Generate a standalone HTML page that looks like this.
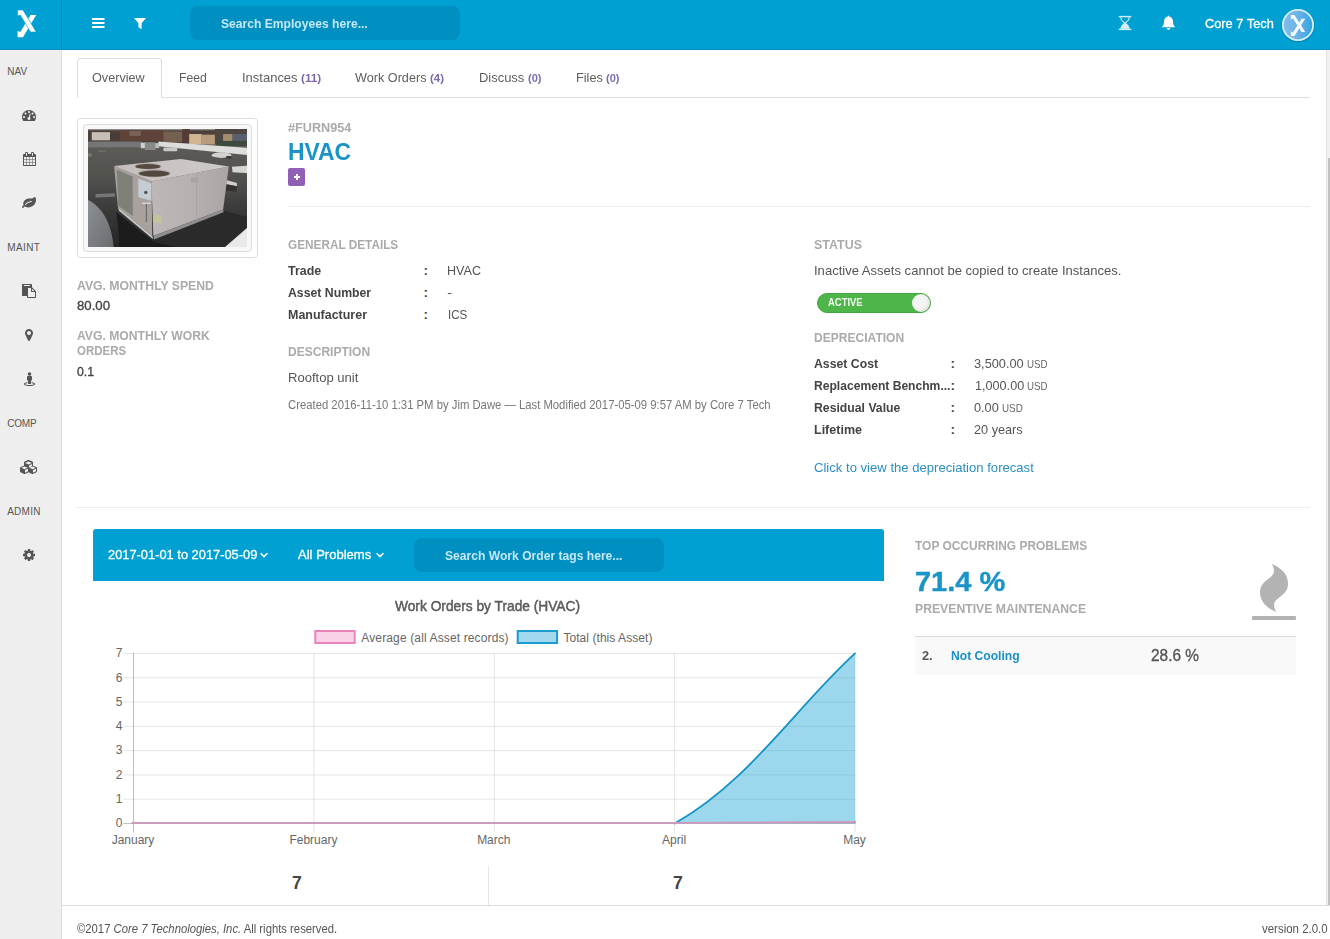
<!DOCTYPE html>
<html lang="en">
<head>
<meta charset="utf-8">
<title>HVAC - Asset Overview</title>
<style>
*{box-sizing:border-box;margin:0;padding:0}
html,body{width:1330px;height:939px;overflow:hidden;background:#fff}
body{font-family:"Liberation Sans",sans-serif;font-size:13px;color:#555;position:relative}
.t{position:absolute;white-space:nowrap;line-height:16px;transform-origin:0 50%}
.m{-webkit-text-stroke:0.3px currentColor}
.hd{position:absolute;left:0;top:0;width:1330px;height:50px;background:#00a0d2;border-bottom:1px solid #008bb9}
.hd .sep{position:absolute;left:61px;top:0;width:1px;height:50px;background:#0087b3}
.sb{position:absolute;left:0;top:50px;width:62px;height:889px;background:#eee;border-right:1px solid #ddd}
.a{position:absolute}
.srch{position:absolute;background:#008fc1;border-radius:8px}
.tabline{position:absolute;left:77px;top:97px;width:1233px;height:1px;background:#ddd}
.tabact{position:absolute;left:77px;top:58px;width:85px;height:40px;border:1px solid #ddd;border-bottom:1px solid #fff;border-radius:4px 4px 0 0;background:#fff}
.hr{position:absolute;height:1px;background:#eee}
.scroll{position:absolute;left:1326px;top:50px;width:4px;height:855px;background:#f1f1f1;border-left:1px solid #e2e2e2}
.scroll i{position:absolute;left:1.4px;top:108px;width:3px;height:747px;background:#c1c1c1}
.foot{position:absolute;left:62px;top:905px;width:1268px;height:34px;border-top:1px solid #ddd;background:#fff}
</style>
</head>
<body>
<header>
<div class="hd">
<div class="sep"></div>
<svg class="a" style="left:0;top:0" width="61" height="50" viewBox="0 0 61 50">
<polygon points="36.2,15 30.5,15 20.3,32 17.6,31 17.6,37.3 23,37.3" fill="#fff"/>
<polygon points="17.6,10 23,10 36.2,32 30.5,32 20.3,15 17.6,16" fill="#fff" stroke="#00a0d2" stroke-width="0.6"/>
</svg>
<svg class="a" style="left:92px;top:18px" width="13" height="10" viewBox="0 0 13 10"><rect x="0" y="0" width="12.5" height="2" fill="#fff"/><rect x="0" y="4" width="12.5" height="2" fill="#fff"/><rect x="0" y="8" width="12.5" height="2" fill="#fff"/></svg>
<svg class="a" style="left:133px;top:17px" width="14" height="13" viewBox="0 0 14 13"><path d="M1 1 H13 L8.6 6.2 V12.2 L5.4 10.2 V6.2 Z" fill="#fff"/></svg>
<div class="srch" style="left:190px;top:6px;width:270px;height:34px"></div>
<span class="t" style="left:221.2px;top:16px;font-size:13.5px;line-height:16px;color:#c4e8f6;font-weight:bold;transform:scaleX(0.897);">Search Employees here...</span>
<svg class="a" style="left:1118px;top:15px" width="14" height="16" viewBox="0 0 14 16"><g fill="#d2effa"><rect x="0.7" y="0.9" width="12.6" height="1.4"/><rect x="0.7" y="13.7" width="12.6" height="1.4"/><path d="M6.3 8 C4.6 9.4 2.4 11 2.3 13.8 H11.7 C11.6 11 9.4 9.4 7.7 8 Z"/></g><path d="M2.6 2.2 C2.7 5 4.8 6.4 6.5 7.9 H7.5 C9.2 6.4 11.3 5 11.4 2.2" fill="none" stroke="#d2effa" stroke-width="1.15"/></svg>
<svg class="a" style="left:1161px;top:15px" width="15" height="16" viewBox="0 0 15 16"><path d="M7.5 0.8 C8.1 0.8 8.5 1.2 8.5 1.8 C10.8 2.3 12 4.2 12 6.5 C12 9.5 12.8 11 14.4 12.3 H0.6 C2.2 11 3 9.5 3 6.5 C3 4.2 4.2 2.3 6.5 1.8 C6.5 1.2 6.9 0.8 7.5 0.8 Z M5.8 13 H9.2 C9.2 14 8.5 14.8 7.5 14.8 C6.5 14.8 5.8 14 5.8 13 Z" fill="#fff"/></svg>
<span class="t" style="left:1204.7px;top:16px;font-size:13.5px;line-height:16px;color:#fff;transform:scaleX(0.948);-webkit-text-stroke:0.3px #fff;">Core 7 Tech</span>
<svg class="a" style="left:1278px;top:5px" width="40" height="40" viewBox="-2 -2 40 40">
<defs><linearGradient id="av" x1="0" y1="0" x2="1" y2="0"><stop offset="0" stop-color="#86bdea"/><stop offset="0.5" stop-color="#6ab3e6"/><stop offset="1" stop-color="#2ba1de"/></linearGradient></defs>
<circle cx="18" cy="18.6" r="16.8" fill="rgba(0,60,100,0.22)"/>
<circle cx="18" cy="18" r="16" fill="url(#av)"/><circle cx="18" cy="18" r="15.1" fill="none" stroke="#d3effb" stroke-width="1.8"/>
<g transform="translate(-2.71,0.29) scale(0.77)" fill="#f3fbff"><polygon points="36.2,15 31.5,15 20.4,32.8 17.6,31.6 17.6,37.3 22.3,37.3"/><polygon points="17.6,10 22.3,10 36.2,32 31.5,32 20.4,14.6 17.6,15.8"/></g>
</svg>
</div>
<div class="scroll"><i></i></div>
</header>
<aside>
<div class="sb"></div>
<span class="t" style="left:7.2px;top:64px;font-size:10px;line-height:16px;color:#555;letter-spacing:0.08px;">NAV</span><span class="t" style="left:7.2px;top:240px;font-size:10px;line-height:16px;color:#555;letter-spacing:0.42px;">MAINT</span><span class="t" style="left:7.2px;top:416px;font-size:10px;line-height:16px;color:#555;letter-spacing:-0.21px;">COMP</span><span class="t" style="left:7.2px;top:504px;font-size:10px;line-height:16px;color:#555;letter-spacing:0.24px;">ADMIN</span>
<svg class="a" style="left:22px;top:108px" width="14" height="14" viewBox="0 0 1792 1792"><path fill="#555" d="M384 1152q0-53-37.500-90.500t-90.500-37.500-90.500 37.500-37.500 90.500 37.500 90.500 90.500 37.500 90.500-37.500 37.500-90.500zM576 704q0-53-37.500-90.500t-90.500-37.500-90.500 37.500-37.500 90.500 37.500 90.500 90.500 37.500 90.500-37.500 37.500-90.500zM1004 1185l101-382q6-26-7.500-48.500t-38.500-29.500-48 6.500-30 39.500l-101 382q-60 5-107 43.500t-63 98.500q-20 77 20 146t117 89 146-20 89-117q16-60-6-117t-72-91zM1664 1152q0-53-37.500-90.500t-90.500-37.500-90.500 37.500-37.500 90.500 37.500 90.500 90.500 37.500 90.500-37.500 37.500-90.500zM1024 512q0-53-37.500-90.500t-90.500-37.500-90.500 37.500-37.500 90.500 37.500 90.500 90.500 37.500 90.500-37.500 37.500-90.500zM1472 704q0-53-37.500-90.500t-90.500-37.500-90.500 37.500-37.500 90.500 37.500 90.500 90.500 37.500 90.500-37.500 37.500-90.500zM1792 1152q0 261-141 483-19 29-54 29h-1402q-35 0-54-29-141-221-141-483 0-182 71-348t191-286 286-191 348-71 348 71 286 191 191 286 71 348z"/></svg>
<svg class="a" style="left:22.5px;top:152px" width="13" height="14" viewBox="0 0 1664 1792"><path fill="#555" d="M128 1664h288v-288h-288v288zM480 1664h320v-288h-320v288zM128 1312h288v-320h-288v320zM480 1312h320v-320h-320v320zM128 928h288v-288h-288v288zM864 1664h320v-288h-320v288zM480 928h320v-288h-320v288zM1248 1664h288v-288h-288v288zM864 1312h320v-320h-320v320zM512 448v-288q0-13-9.500-22.500t-22.500-9.500h-64q-13 0-22.500 9.500t-9.500 22.500v288q0 13 9.500 22.500t22.500 9.500h64q13 0 22.500-9.500t9.500-22.500zM1248 1312h288v-320h-288v320zM864 928h320v-288h-320v288zM1248 928h288v-288h-288v288zM1280 448v-288q0-13-9.500-22.500t-22.500-9.500h-64q-13 0-22.500 9.500t-9.500 22.500v288q0 13 9.500 22.500t22.500 9.500h64q13 0 22.500-9.500t9.500-22.500zM1664 384v1280q0 52-38 90t-90 38h-1408q-52 0-90-38t-38-90v-1280q0-52 38-90t90-38h128v-96q0-66 47-113t113-47h64q66 0 113 47t47 113v96h384v-96q0-66 47-113t113-47h64q66 0 113 47t47 113v96h128q52 0 90 38t38 90z"/></svg>
<svg class="a" style="left:22px;top:196px" width="14" height="14" viewBox="0 0 1792 1792"><path fill="#555" d="M1280 704q0-26-19-45t-45-19q-172 0-318 49.500t-259.500 134-235.500 219.500q-19 21-19 45 0 26 19 45t45 19q24 0 45-19 27-24 74-71t67-66q137-124 268.500-176t313.500-52q26 0 45-19t19-45zM1792 506q0 95-20 193-46 224-184.500 383t-357.500 268q-214 108-438 108-148 0-286-47-15-5-88-42t-96-37q-16 0-39.500 32t-45 70-52.500 70-60 32q-43 0-63.500-17.500t-45.500-59.500q-2-4-6-11t-5.500-10-3-9.500-1.500-13.500q0-35 31-73.500t68-65.500 68-56 31-48q0-4-14-38t-16-44q-9-51-9-104 0-115 43.500-220t119-184.500 170.500-139 204-95.500q55-18 145-25.500t179.500-9 178.500-6 163.500-24 113.500-56.500l29.500-29.500t29.500-28 27-20 36.500-16 43.500-4.500q39 0 70.500 46t47.500 112 24 124 8 96z"/></svg>
<svg class="a" style="left:22px;top:284px" width="14" height="14" viewBox="0 0 1792 1792"><path fill="#555" d="M768 1664h896v-640h-416q-40 0-68-28t-28-68v-416h-384v1152zM1024 224v-64q0-13-9.500-22.500t-22.500-9.500h-704q-13 0-22.500 9.500t-9.500 22.500v64q0 13 9.500 22.500t22.500 9.500h704q13 0 22.500-9.500t9.500-22.500zM1280 896h299l-299-299v299zM1792 1024v672q0 40-28 68t-68 28h-960q-40 0-68-28t-28-68v-160h-544q-40 0-68-28t-28-68v-1344q0-40 28-68t68-28h1088q40 0 68 28t28 68v328q21 13 36 28l408 408q28 28 48 76t20 88z"/></svg>
<svg class="a" style="left:25px;top:328px" width="8" height="14" viewBox="0 0 1024 1792"><path fill="#555" d="M768 640q0-106-75-181t-181-75-181 75-75 181 75 181 181 75 181-75 75-181zM1024 640q0 109-33 179l-364 774q-16 33-47.500 52t-67.500 19-67.500-19-46.500-52l-365-774q-33-70-33-179 0-212 150-362t362-150 362 150 150 362z"/></svg>
<svg class="a" style="left:23.5px;top:372px" width="11" height="14" viewBox="0 0 1408 1792"><path fill="#555" d="M1408 1536q0 63-61.500 113.500t-164 81-225 46-253.500 15.500-253.500-15.500-225-46-164-81-61.500-113.500q0-49 33-88.500t91-66.500 118-44.500 131-29.500q26-5 48 10.500t26 41.500q5 26-10.500 48t-41.500 26q-58 10-106 23.500t-76.500 25.500-48.500 23.500-27.500 19.500-8.500 12q3 11 27 26.500t73 33 114 32.500 160.500 25 201.500 10 201.500-10 160.500-25 114-33 73-33.500 27-27.500q-1-4-8.500-11t-27.500-19-48.500-23.500-76.500-25-106-23.500q-26-4-41.500-26t-10.500-48q4-26 26-41.500t48-10.500q71 12 131 29.500t118 44.500 91 66.500 33 88.500zM1024 640v384q0 26-19 45t-45 19h-64v384q0 26-19 45t-45 19h-256q-26 0-45-19t-19-45v-384h-64q-26 0-45-19t-19-45v-384q0-53 37.500-90.500t90.500-37.500h384q53 0 90.500 37.500t37.500 90.500zM928 256q0 93-65.500 158.500t-158.500 65.500-158.500-65.500-65.500-158.500 65.500-158.500 158.500-65.500 158.500 65.500 65.500 158.500z"/></svg>
<svg class="a" style="left:20px;top:460px" width="18" height="14" viewBox="0 0 2304 1792"><path fill="#555" d="M640 1632l384-192v-314l-384 164v342zM576 1178l404-173-404-173-404 173zM1664 1632l384-192v-314l-384 164v342zM1600 1178l404-173-404-173-404 173zM1152 958l384-165v-266l-384 164v267zM1088 579l441-189-441-189-441 189zM2176 1024v416q0 36-19 67t-52 47l-448 224q-25 14-57 14t-57-14l-448-224q-4-2-7-4-2 2-7 4l-448 224q-25 14-57 14t-57-14l-448-224q-33-16-52-47t-19-67v-416q0-38 21.500-70t56.500-48l434-186v-400q0-38 21.500-70t56.500-48l448-192q23-10 50-10t50 10l448 192q35 16 56.500 48t21.500 70v400l434 186q36 16 57 48t21 70z"/></svg>
<svg class="a" style="left:23px;top:548px" width="12" height="14" viewBox="0 0 1536 1792"><path fill="#555" d="M1024 896q0-106-75-181t-181-75-181 75-75 181 75 181 181 75 181-75 75-181zM1536 787v222q0 12-8 23t-20 13l-185 28q-19 54-39 91 35 50 107 138 10 12 10 25t-9 23q-27 37-99 108t-94 71q-12 0-26-9l-138-108q-44 23-91 38-16 136-29 186-7 28-36 28h-222q-14 0-24.500-8.500t-11.500-21.500l-28-184q-49-16-90-37l-141 107q-10 9-25 9-14 0-25-11-126-114-165-168-7-10-7-23 0-12 8-23 15-21 51-66.500t54-70.500q-27-50-41-99l-183-27q-13-2-21-12.500t-8-23.500v-222q0-12 8-23t19-13l186-28q14-46 39-92-40-57-107-138-10-12-10-24 0-10 9-23 26-36 98.500-107.500t94.500-71.500q13 0 26 10l138 107q44-23 91-38 16-136 29-186 7-28 36-28h222q14 0 24.500 8.500t11.500 21.500l28 184q49 16 90 37l142-107q9-9 24-9 13 0 25 10 129 119 165 170 7 8 7 22 0 12-8 23-15 21-51 66.500t-54 70.500q26 50 41 98l183 28q13 2 21 12.500t8 23.500z"/></svg>

</aside>
<main>
<nav>
<div class="tabline"></div><div class="tabact"></div>
<span class="t" style="left:92.4px;top:70px;font-size:13.5px;line-height:16px;color:#5e5e5e;transform:scaleX(0.936);">Overview</span><span class="t" style="left:179.3px;top:70px;font-size:13.5px;line-height:16px;color:#5e5e5e;transform:scaleX(0.906);">Feed</span><span class="t" style="left:241.8px;top:70px;font-size:13.5px;line-height:16px;color:#5e5e5e;transform:scaleX(0.962);">Instances</span><span class="t" style="left:301.2px;top:70px;font-size:11.6px;line-height:16px;color:#7d6aab;font-weight:bold;transform:scaleX(1.014);">(11)</span><span class="t" style="left:355.4px;top:70px;font-size:13.5px;line-height:16px;color:#5e5e5e;transform:scaleX(0.937);">Work Orders</span><span class="t" style="left:430.2px;top:70px;font-size:11.6px;line-height:16px;color:#7d6aab;font-weight:bold;transform:scaleX(0.986);">(4)</span><span class="t" style="left:478.6px;top:70px;font-size:13.5px;line-height:16px;color:#5e5e5e;transform:scaleX(0.958);">Discuss</span><span class="t" style="left:527.7px;top:70px;font-size:11.6px;line-height:16px;color:#7d6aab;font-weight:bold;transform:scaleX(0.951);">(0)</span><span class="t" style="left:575.6px;top:70px;font-size:13.5px;line-height:16px;color:#5e5e5e;transform:scaleX(0.939);">Files</span><span class="t" style="left:606.2px;top:70px;font-size:11.6px;line-height:16px;color:#7d6aab;font-weight:bold;transform:scaleX(0.951);">(0)</span>
</nav>
<section>
<div class="a" style="left:77px;top:118px;width:181px;height:140px;border:1px solid #ddd;border-radius:4px;background:#fff"></div>
<div class="a" style="left:83px;top:124px;width:169px;height:128px;border:1px solid #ddd;border-radius:4px;background:#f8f8f8"></div>
<svg class="a" style="left:88px;top:129px" width="159" height="118" viewBox="0 0 1265 939" preserveAspectRatio="none">
<defs>
<linearGradient id="rf" x1="0" y1="0" x2="0" y2="1"><stop offset="0.12" stop-color="#5f5d59"/><stop offset="0.45" stop-color="#504f4c"/><stop offset="0.72" stop-color="#363636"/><stop offset="1" stop-color="#252525"/></linearGradient>
<linearGradient id="tp" x1="0" y1="0" x2="1" y2="0"><stop offset="0" stop-color="#c4bfbe"/><stop offset="1" stop-color="#cfcaca"/></linearGradient>
<linearGradient id="fr" x1="0" y1="0" x2="1" y2="0"><stop offset="0" stop-color="#bdb7b8"/><stop offset="0.55" stop-color="#b6b0b1"/><stop offset="1" stop-color="#aaa4a5"/></linearGradient>
<linearGradient id="dc" x1="0" y1="0" x2="1" y2="1"><stop offset="0" stop-color="#909396"/><stop offset="1" stop-color="#696b6f"/></linearGradient>
<filter id="bl" x="-5%" y="-5%" width="110%" height="110%"><feGaussianBlur stdDeviation="6"/></filter>
<clipPath id="pc"><rect x="0" y="0" width="1265" height="939"/></clipPath>
</defs>
<g clip-path="url(#pc)"><g filter="url(#bl)">
<rect x="-20" y="-20" width="1305" height="979" fill="url(#rf)"/>
<rect x="-20" y="-20" width="1305" height="135" fill="#4e3f3a"/>
<rect x="-20" y="-20" width="1305" height="30" fill="#8d8a8c"/>
<rect x="30" y="25" width="145" height="65" fill="#c4c0b8"/>
<rect x="175" y="35" width="80" height="55" fill="#4b3b38"/>
<rect x="255" y="10" width="345" height="85" fill="#5f4339"/>
<rect x="330" y="15" width="90" height="40" fill="#7a6257"/>
<rect x="600" y="20" width="150" height="85" fill="#75604f"/>
<rect x="750" y="0" width="60" height="110" fill="#553c36"/>
<rect x="805" y="40" width="100" height="80" fill="#cfb691"/>
<rect x="905" y="45" width="105" height="78" fill="#b79c7b"/>
<rect x="1010" y="0" width="275" height="120" fill="#4e4741"/>
<rect x="1075" y="40" width="75" height="55" fill="#a58d70"/>
<rect x="1150" y="40" width="135" height="55" fill="#596170"/>
<rect x="1020" y="95" width="265" height="40" fill="#3f4a3c"/>
<polygon points="-20,100 425,100 425,145 -20,148" fill="#747675"/>
<polygon points="560,100 1285,152 1285,208 560,137" fill="#dddddb"/>
<rect x="420" y="108" width="45" height="45" fill="#cfcfcd"/>
<rect x="452" y="105" width="85" height="62" fill="#868b89"/>
<rect x="535" y="112" width="30" height="40" fill="#bdbdbb"/>
<rect x="600" y="148" width="110" height="30" rx="8" fill="#c9c9c6"/>
<ellipse cx="1062" cy="208" rx="80" ry="22" fill="#d2d1cd"/>
<rect x="1100" y="215" width="40" height="20" fill="#3a3a38"/>
<polygon points="1145,300 1285,290 1285,352 1150,345" fill="#d6d5d0"/>
<polygon points="60,518 215,512 215,540 60,545" fill="#767676"/>
<rect x="0" y="195" width="30" height="25" fill="#777"/>
<rect x="80" y="170" width="60" height="14" fill="#6d6d6b"/>
<polygon points="225,660 520,900 720,939 250,939 240,780" fill="#1c1c1c"/>
<polygon points="520,900 1085,650 1265,700 1265,939 700,939" fill="#2c2c2c"/>
<polygon points="1100,405 1185,430 1185,455 1100,440" fill="#d0cec7"/>
<polygon points="1100,440 1185,455 1180,500 1100,490" fill="#33332f"/>
<path d="M-20 555 C90 600 190 720 205 959 L-20 959 Z" fill="url(#dc)"/>
<polygon points="1090,939 1265,788 1285,788 1285,959 1090,959" fill="#e9e9e9"/>
<polygon points="208,295 505,418 512,852 238,622" fill="#a9a19e"/>
<polygon points="228,322 355,378 357,692 242,612" fill="#7f8078"/>
<polygon points="238,622 512,852 518,878 248,652" fill="#c6c6c4"/>
<polygon points="505,418 1120,298 1075,640 520,852" fill="url(#fr)"/>
<polygon points="520,852 1075,640 1078,662 525,880" fill="#8f8f8f"/>
<polygon points="208,295 740,238 1120,298 505,418" fill="url(#tp)"/>
<polygon points="400,395 505,432 505,572 400,542" fill="#c3cdd3"/>
<circle cx="460" cy="505" r="13" fill="#4b4b4b"/>
<rect x="460" y="590" width="9" height="150" fill="#6b6766"/>
<rect x="430" y="585" width="70" height="12" fill="#d3d3d3"/>
<rect x="860" y="352" width="7" height="370" fill="#aaa3a4"/>
<rect x="820" y="385" width="55" height="40" fill="#a9a2a2"/>
<rect x="525" y="685" width="60" height="60" fill="#c4c49c"/>
<ellipse cx="477" cy="296" rx="109" ry="26" fill="#b3aca8"/>
<ellipse cx="477" cy="298" rx="100" ry="20" fill="#54483f"/>
<ellipse cx="527" cy="352" rx="132" ry="32" fill="#b3aca8"/>
<ellipse cx="527" cy="355" rx="122" ry="25" fill="#51463d"/>
</g></g>
</svg>

<span class="t" style="left:76.7px;top:278px;font-size:13.5px;line-height:16px;color:#aaa;font-weight:bold;transform:scaleX(0.905);">AVG. MONTHLY SPEND</span><span class="t" style="left:76.7px;top:298px;font-size:13.5px;line-height:16px;color:#444;transform:scaleX(0.979);-webkit-text-stroke:0.35px #444;">80.00</span><span class="t" style="left:76.7px;top:328px;font-size:13.5px;line-height:16px;color:#aaa;font-weight:bold;transform:scaleX(0.900);">AVG. MONTHLY WORK</span><span class="t" style="left:76.7px;top:343px;font-size:13.5px;line-height:16px;color:#aaa;font-weight:bold;transform:scaleX(0.851);">ORDERS</span><span class="t" style="left:76.7px;top:364px;font-size:13.5px;line-height:16px;color:#444;transform:scaleX(0.909);-webkit-text-stroke:0.35px #444;">0.1</span>
<span class="t" style="left:287.5px;top:120px;font-size:13.5px;line-height:16px;color:#aaa;font-weight:bold;transform:scaleX(0.939);">#FURN954</span><span class="t" style="left:288.2px;top:138px;font-size:23.5px;line-height:29px;color:#1a94c8;font-weight:bold;transform:scaleX(0.973);">HVAC</span>
<div class="a" style="left:288px;top:168px;width:17px;height:18px;border-radius:2px;background:#8f60b6"></div>
<svg class="a" style="left:293px;top:173px" width="8" height="8" viewBox="0 0 8 8"><path d="M3 1h2v2h2v2h-2v2h-2v-2h-2v-2h2z" fill="#fff"/></svg>
<div class="hr" style="left:288px;top:206px;width:1022px"></div>
<span class="t" style="left:287.8px;top:237px;font-size:13.5px;line-height:16px;color:#aaa;font-weight:bold;transform:scaleX(0.873);">GENERAL DETAILS</span><span class="t" style="left:287.8px;top:263px;font-size:13.5px;line-height:16px;color:#444;font-weight:bold;transform:scaleX(0.921);">Trade</span><span class="t" style="left:423.6px;top:263px;font-size:13.5px;line-height:16px;color:#444;font-weight:bold;">:</span><span class="t" style="left:447.2px;top:263px;font-size:13.5px;line-height:16px;color:#555;transform:scaleX(0.931);">HVAC</span>
<span class="t" style="left:287.8px;top:285px;font-size:13.5px;line-height:16px;color:#444;font-weight:bold;transform:scaleX(0.908);">Asset Number</span><span class="t" style="left:423.6px;top:285px;font-size:13.5px;line-height:16px;color:#444;font-weight:bold;">:</span><span class="t" style="left:447.2px;top:285px;font-size:13.5px;line-height:16px;color:#555;">-</span>
<span class="t" style="left:287.8px;top:307px;font-size:13.5px;line-height:16px;color:#444;font-weight:bold;transform:scaleX(0.924);">Manufacturer</span><span class="t" style="left:423.6px;top:307px;font-size:13.5px;line-height:16px;color:#444;font-weight:bold;">:</span><span class="t" style="left:447.9px;top:307px;font-size:13.5px;line-height:16px;color:#555;transform:scaleX(0.856);">ICS</span>
<span class="t" style="left:287.8px;top:344px;font-size:13.5px;line-height:16px;color:#aaa;font-weight:bold;transform:scaleX(0.890);">DESCRIPTION</span><span class="t" style="left:287.8px;top:370px;font-size:13.5px;line-height:16px;color:#555;transform:scaleX(0.967);">Rooftop unit</span><span class="t" style="left:287.9px;top:397px;font-size:12.4px;line-height:16px;color:#777;transform:scaleX(0.912);">Created 2016-11-10 1:31 PM by Jim Dawe — Last Modified 2017-05-09 9:57 AM by Core 7 Tech</span>
<span class="t" style="left:814.1px;top:237px;font-size:13.5px;line-height:16px;color:#aaa;font-weight:bold;transform:scaleX(0.923);">STATUS</span><span class="t" style="left:814.1px;top:263px;font-size:13.5px;line-height:16px;color:#555;transform:scaleX(0.966);">Inactive Assets cannot be copied to create Instances.</span>
<div class="a" style="left:817px;top:293px;width:114px;height:20px;border-radius:10px;background:#4db549;border:1px solid #45a541"></div>
<div class="a" style="left:912px;top:294px;width:18px;height:18px;border-radius:9px;background:#f4f4f4;box-shadow:inset -2px -2px 3px rgba(0,0,0,.06)"></div>
<span class="t" style="left:828.0px;top:294px;font-size:10.6px;line-height:16px;color:#f4fff0;font-weight:bold;transform:scaleX(0.891);">ACTIVE</span>
<span class="t" style="left:814.1px;top:330px;font-size:13.5px;line-height:16px;color:#aaa;font-weight:bold;transform:scaleX(0.893);">DEPRECIATION</span><span class="t" style="left:814.1px;top:356px;font-size:13.5px;line-height:16px;color:#444;font-weight:bold;transform:scaleX(0.909);">Asset Cost</span><span class="t" style="left:950.6px;top:356px;font-size:13.5px;line-height:16px;color:#444;font-weight:bold;">:</span><span class="t" style="left:974.2px;top:356px;font-size:13.5px;line-height:16px;color:#555;transform:scaleX(0.945);">3,500.00</span><span class="t" style="left:1027.1px;top:356px;font-size:11.4px;line-height:16px;color:#666;transform:scaleX(0.854);">USD</span>
<span class="t" style="left:814.1px;top:378px;font-size:13.5px;line-height:16px;color:#444;font-weight:bold;transform:scaleX(0.896);">Replacement Benchm...</span><span class="t" style="left:950.6px;top:378px;font-size:13.5px;line-height:16px;color:#444;font-weight:bold;">:</span><span class="t" style="left:974.7px;top:378px;font-size:13.5px;line-height:16px;color:#555;transform:scaleX(0.936);">1,000.00</span><span class="t" style="left:1027.1px;top:378px;font-size:11.4px;line-height:16px;color:#666;transform:scaleX(0.854);">USD</span>
<span class="t" style="left:814.1px;top:400px;font-size:13.5px;line-height:16px;color:#444;font-weight:bold;transform:scaleX(0.906);">Residual Value</span><span class="t" style="left:950.6px;top:400px;font-size:13.5px;line-height:16px;color:#444;font-weight:bold;">:</span><span class="t" style="left:974.2px;top:400px;font-size:13.5px;line-height:16px;color:#555;transform:scaleX(0.943);">0.00</span><span class="t" style="left:1002.1px;top:400px;font-size:11.4px;line-height:16px;color:#666;transform:scaleX(0.863);">USD</span>
<span class="t" style="left:814.1px;top:422px;font-size:13.5px;line-height:16px;color:#444;font-weight:bold;transform:scaleX(0.927);">Lifetime</span><span class="t" style="left:950.6px;top:422px;font-size:13.5px;line-height:16px;color:#444;font-weight:bold;">:</span><span class="t" style="left:974.2px;top:422px;font-size:13.5px;line-height:16px;color:#555;transform:scaleX(0.940);">20 years</span>
<span class="t" style="left:814.1px;top:460px;font-size:13.5px;line-height:16px;color:#2b8fc2;transform:scaleX(0.970);">Click to view the depreciation forecast</span>
<div class="hr" style="left:77px;top:507px;width:1233px"></div>
</section>
<section>
<div class="a" style="left:93px;top:529px;width:791px;height:52px;background:#00a0d2;border-radius:3px 3px 0 0"></div>
<div class="srch" style="left:414px;top:538px;width:250px;height:34px"></div>
<span class="t" style="left:107.7px;top:547px;font-size:13.5px;line-height:16px;color:#fff;transform:scaleX(0.952);-webkit-text-stroke:0.3px #fff;">2017-01-01 to 2017-05-09</span><span class="t" style="left:298.3px;top:547px;font-size:13.5px;line-height:16px;color:#fff;transform:scaleX(0.967);-webkit-text-stroke:0.3px #fff;">All Problems</span><span class="t" style="left:444.8px;top:548px;font-size:13.5px;line-height:16px;color:#c4e8f6;font-weight:bold;transform:scaleX(0.897);">Search Work Order tags here...</span>
<svg class="a" style="left:259px;top:551px" width="10" height="8" viewBox="0 0 10 8"><path d="M1.6 2.2 L5 5.6 L8.4 2.2" fill="none" stroke="#fff" stroke-width="1.5"/></svg>
<svg class="a" style="left:375px;top:551px" width="10" height="8" viewBox="0 0 10 8"><path d="M1.6 2.2 L5 5.6 L8.4 2.2" fill="none" stroke="#fff" stroke-width="1.5"/></svg>
<span class="t" style="left:395.2px;top:598px;font-size:14.1px;line-height:16px;color:#5c5c5c;transform:scaleX(0.975);-webkit-text-stroke:0.5px #5c5c5c;">Work Orders by Trade (HVAC)</span>
<svg class="a" style="left:93px;top:620px" width="791" height="240" viewBox="93 620 791 240" font-family="Liberation Sans, sans-serif" font-size="12" fill="#666">
<rect x="315.3" y="631" width="39.4" height="12" fill="#f9d2e7" stroke="#e985bb" stroke-width="2"/>
<text x="361.3" y="642.4" textLength="147.3" lengthAdjust="spacing">Average (all Asset records)</text>
<rect x="517.7" y="631" width="39.4" height="12" fill="#a3d9ee" stroke="#1b9bcf" stroke-width="2"/>
<text x="563.4" y="642.4" textLength="89" lengthAdjust="spacing">Total (this Asset)</text>
<line x1="123.5" y1="653.50" x2="855.5" y2="653.50" stroke="rgba(0,0,0,0.1)" stroke-width="1"/>
<text x="122.5" y="657.3" text-anchor="end">7</text>
<line x1="123.5" y1="677.79" x2="855.5" y2="677.79" stroke="rgba(0,0,0,0.1)" stroke-width="1"/>
<text x="122.5" y="681.6" text-anchor="end">6</text>
<line x1="123.5" y1="702.07" x2="855.5" y2="702.07" stroke="rgba(0,0,0,0.1)" stroke-width="1"/>
<text x="122.5" y="705.9" text-anchor="end">5</text>
<line x1="123.5" y1="726.36" x2="855.5" y2="726.36" stroke="rgba(0,0,0,0.1)" stroke-width="1"/>
<text x="122.5" y="730.2" text-anchor="end">4</text>
<line x1="123.5" y1="750.64" x2="855.5" y2="750.64" stroke="rgba(0,0,0,0.1)" stroke-width="1"/>
<text x="122.5" y="754.4" text-anchor="end">3</text>
<line x1="123.5" y1="774.93" x2="855.5" y2="774.93" stroke="rgba(0,0,0,0.1)" stroke-width="1"/>
<text x="122.5" y="778.7" text-anchor="end">2</text>
<line x1="123.5" y1="799.21" x2="855.5" y2="799.21" stroke="rgba(0,0,0,0.1)" stroke-width="1"/>
<text x="122.5" y="803.0" text-anchor="end">1</text>
<line x1="123.5" y1="823.50" x2="855.5" y2="823.50" stroke="rgba(0,0,0,0.25)" stroke-width="1"/>
<text x="122.5" y="827.3" text-anchor="end">0</text>
<line x1="133.50" y1="653" x2="133.50" y2="832.5" stroke="rgba(0,0,0,0.25)" stroke-width="1"/>
<line x1="313.88" y1="653" x2="313.88" y2="832.5" stroke="rgba(0,0,0,0.1)" stroke-width="1"/>
<line x1="494.25" y1="653" x2="494.25" y2="832.5" stroke="rgba(0,0,0,0.1)" stroke-width="1"/>
<line x1="674.62" y1="653" x2="674.62" y2="832.5" stroke="rgba(0,0,0,0.1)" stroke-width="1"/>
<line x1="855.00" y1="653" x2="855.00" y2="832.5" stroke="rgba(0,0,0,0.1)" stroke-width="1"/>
<text x="133.0" y="843.7" text-anchor="middle">January</text>
<text x="313.4" y="843.7" text-anchor="middle">February</text>
<text x="493.8" y="843.7" text-anchor="middle">March</text>
<text x="674.1" y="843.7" text-anchor="middle">April</text>
<text x="854.5" y="843.7" text-anchor="middle">May</text>
<path d="M674.6 823.5 C748.7 782 794.1 709.1 855 653.4 L855 823.5 Z" fill="rgba(20,160,214,0.42)"/>
<path d="M674.6 823.5 C748.7 782 794.1 709.1 855 653.4" fill="none" stroke="#1293c5" stroke-width="1.8" stroke-linejoin="round" stroke-linecap="round"/>
<path d="M131.5 823 L674.6 823 L856 822.1" fill="none" stroke="#c99bbd" stroke-width="2.1"/>
</svg>

<span class="t" style="left:291.9px;top:872px;font-size:17.6px;line-height:22px;color:#444;font-weight:bold;">7</span><span class="t" style="left:672.9px;top:872px;font-size:17.6px;line-height:22px;color:#444;font-weight:bold;">7</span>
<div class="a" style="left:488px;top:866px;width:1px;height:39px;background:#e5e5e5"></div>
</section>
<section>
<span class="t" style="left:914.7px;top:538px;font-size:13.5px;line-height:16px;color:#aaa;font-weight:bold;transform:scaleX(0.885);">TOP OCCURRING PROBLEMS</span><span class="t" style="left:914.5px;top:564px;font-size:28.4px;line-height:35px;color:#1a94c8;font-weight:bold;transform:scaleX(1.021);-webkit-text-stroke:0.4px #1a94c8;">71.4 %</span><span class="t" style="left:914.7px;top:601px;font-size:13.5px;line-height:16px;color:#aaa;font-weight:bold;transform:scaleX(0.905);">PREVENTIVE MAINTENANCE</span>
<svg class="a" style="left:1252px;top:562px" width="44" height="60" viewBox="0 -128 1408 1920" fill="#b3b3b3"><path d="M1408 1632v64q0 13-9.500 22.500t-22.500 9.500h-1344q-13 0-22.500-9.500t-9.500-22.500v-64q0-13 9.500-22.500t22.500-9.500h1344q13 0 22.500 9.500t9.500 22.500z"/><path transform="translate(0,-66)" d="M1152 640q0 78-24.500 144t-64 112.500-87.500 88-96 77.500-87.500 72-64 81.500-24.500 96.500q0 96 67 224l-4-1 1 1q-90-41-160-83t-138.500-100-113.500-122.500-72.500-150.500-27.500-184q0-78 24.500-144t64-112.500 87.500-88 96-77.500 87.500-72 64-81.500 24.500-96.500q0-94-66-224l3 1-1-1q90 41 160 83t138.500 100 113.500 122.500 72.500 150.500 27.500 184z"/></svg>

<div class="a" style="left:915px;top:636px;width:381px;height:39px;background:#f9f9f9;border-top:1px solid #ddd"></div>
<span class="t" style="left:922.3px;top:648px;font-size:13.5px;line-height:16px;color:#555;font-weight:bold;transform:scaleX(0.948);">2.</span><span class="t" style="left:951.1px;top:648px;font-size:13.5px;line-height:16px;color:#1a8fc8;font-weight:bold;transform:scaleX(0.897);">Not Cooling</span><span class="t" style="left:1151.3px;top:646px;font-size:16.6px;line-height:20px;color:#555;transform:scaleX(0.928);-webkit-text-stroke:0.35px #555;">28.6 %</span>
</section>
</main>
<footer>
<div class="foot"></div>
<span class="t" style="left:76.9px;top:921px;font-size:12.4px;line-height:16px;color:#555;transform:scaleX(0.911);">©2017 <i>Core 7 Technologies, Inc.</i> All rights reserved.</span><span class="t" style="left:1262.4px;top:921px;font-size:12.4px;line-height:16px;color:#555;transform:scaleX(0.925);">version 2.0.0</span>
</footer>
</body>
</html>
